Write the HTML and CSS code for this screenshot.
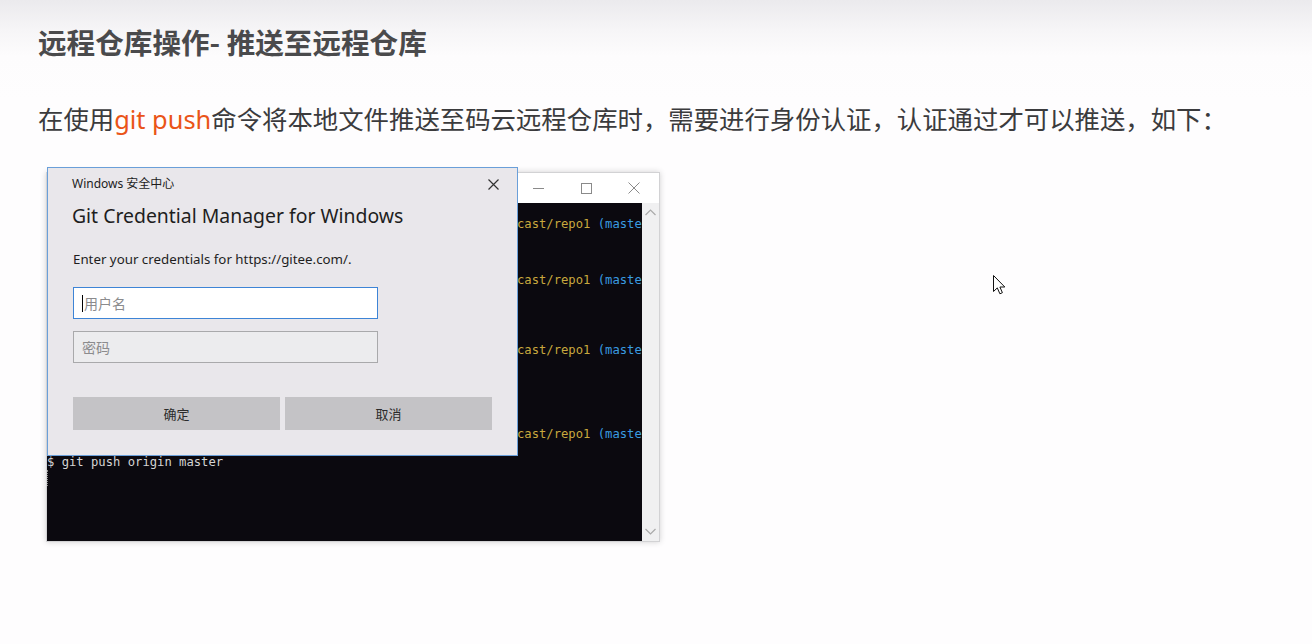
FILE: index.html
```html
<!DOCTYPE html>
<html lang="zh">
<head>
<meta charset="utf-8">
<title>远程仓库操作- 推送至远程仓库</title>
<link rel="stylesheet" href="styles.css">
</head>
<body>
<div class="page">
  <h1 class="title">远程仓库操作- 推送至远程仓库</h1>
  <p class="lead">在使用<span class="hl">git push</span>命令将本地文件推送至码云远程仓库时，需要进行身份认证，认证通过才可以推送，如下：</p>

  <div class="shot">
    <div class="term">
      <div class="term-bar">
        <div class="ctl"><svg width="11" height="11" viewBox="0 0 11 11"><line x1="0" y1="5.5" x2="11" y2="5.5" stroke="#8a8a8a" stroke-width="1"/></svg></div>
        <div class="ctl"><svg width="11" height="11" viewBox="0 0 11 11"><rect x="0.5" y="0.5" width="10" height="10" fill="none" stroke="#8a8a8a" stroke-width="1"/></svg></div>
        <div class="ctl"><svg width="12" height="12" viewBox="0 0 12 12"><path d="M0.5 0.5 L11.5 11.5 M11.5 0.5 L0.5 11.5" stroke="#8a8a8a" stroke-width="1"/></svg></div>
      </div>
      <div class="term-body">
        <div class="screen">
          <div class="ln prompt"><span class="y">cast/repo1</span> <span class="c">(maste</span></div>
          <div class="ln prompt gap4"><span class="y">cast/repo1</span> <span class="c">(maste</span></div>
          <div class="ln prompt gap5"><span class="y">cast/repo1</span> <span class="c">(maste</span></div>
          <div class="ln prompt gap6"><span class="y">cast/repo1</span> <span class="c">(maste</span></div>
          <div class="ln gap2">$ git push origin master</div>
          <div class="caret"></div>
        </div>
        <div class="scroll">
          <svg width="11" height="7" viewBox="0 0 11 7"><polyline points="0.5,6 5.5,1 10.5,6" fill="none" stroke="#a9a9a9" stroke-width="1.2"/></svg>
          <svg width="11" height="7" viewBox="0 0 11 7"><polyline points="0.5,1 5.5,6 10.5,1" fill="none" stroke="#a9a9a9" stroke-width="1.2"/></svg>
        </div>
      </div>
    </div>

    <div class="dialog">
      <div class="dlg-top">
        <span class="dlg-caption">Windows 安全中心</span>
        <svg class="dlg-x" width="11" height="11" viewBox="0 0 11 11"><path d="M0.5 0.5 L10.5 10.5 M10.5 0.5 L0.5 10.5" stroke="#333" stroke-width="1.2"/></svg>
      </div>
      <div class="dlg-head">Git Credential Manager for Windows</div>
      <div class="dlg-text">Enter your credentials for https://gitee.com/.</div>
      <div class="field focus"><span class="cur"></span><span class="ph">用户名</span></div>
      <div class="field second"><span class="ph">密码</span></div>
      <div class="btns">
        <div class="btn">确定</div>
        <div class="btn">取消</div>
      </div>
    </div>
  </div>
</div>

<svg class="pointer" width="14" height="21" viewBox="0 0 14 21"><path d="M0.5 0.5 L0.5 16.5 L4.3 12.9 L6.9 18.8 L9.4 17.7 L6.9 12 L11.8 12 Z" fill="#fff" stroke="#111" stroke-width="1" stroke-linejoin="miter"/></svg>
</body>
</html>
```

FILE: styles.css
```css
html, body {
  margin: 0;
  padding: 0;
}
body {
  width: 1312px;
  height: 644px;
  overflow: hidden;
  background: #fefdfe linear-gradient(#ebeaed 0px, #f6f5f7 30px, #fdfcfd 56px, #fefdfe 100px) no-repeat;
  font-family: "Noto Sans CJK SC", "Noto Sans", sans-serif;
  position: relative;
}
.page {
  padding: 22px 38px 0 38px;
}
.title {
  margin: 0;
  font-size: 28.6px;
  line-height: 40px;
  font-weight: 700;
  color: #4a4a4c;
  letter-spacing: 0;
}
.lead {
  margin: 38px 0 0 0;
  font-size: 25.4px;
  line-height: 36px;
  color: #3b3b3d;
  white-space: nowrap;
}
.hl {
  color: #ea5418;
  font-family: "Noto Sans", "Noto Sans CJK SC", sans-serif;
}
.shot {
  position: relative;
  margin: 30px 0 0 8px;
  padding-top: 5px;
  width: 614px;
  height: 370px;
}
.term {
  width: 614px;
  height: 370px;
  box-sizing: border-box;
  border: 1px solid #d2d2d4;
  background: #fff;
  box-shadow: 0 0 6px rgba(0, 0, 0, 0.18);
  display: flex;
  flex-direction: column;
}
.term-bar {
  height: 30px;
  display: flex;
  justify-content: flex-end;
  padding-right: 1px;
  background: #fff;
}
.ctl {
  width: 48px;
  height: 30px;
  display: flex;
  align-items: center;
  justify-content: center;
}
.term-body {
  flex: 1;
  display: flex;
  min-height: 0;
}
.screen {
  width: 595px;
  background: #0b090f;
  overflow: hidden;
  padding-top: 14px;
  box-sizing: border-box;
  font-family: "DejaVu Sans Mono", "Liberation Mono", monospace;
  font-size: 12.2px;
  line-height: 14px;
  color: #d4d4d4;
}
.ln {
  white-space: pre;
  height: 14px;
}
.prompt {
  padding-left: 470px;
}
.gap4 { margin-top: 42px; }
.gap5 { margin-top: 56px; }
.gap6 { margin-top: 70px; }
.gap2 { margin-top: 14px; }
.y { color: #c8a83e; }
.c { color: #3a9ce0; }
.caret {
  margin-top: 1px;
  width: 0;
  height: 16px;
  border-left: 1px dotted #8c8c8c;
}
.scroll {
  flex: 1;
  background: #f0f0f1;
  display: flex;
  flex-direction: column;
  justify-content: space-between;
  align-items: center;
  padding: 6px 0 6px 0;
}
.dialog {
  position: absolute;
  left: 1px;
  top: 0;
  width: 471px;
  height: 289px;
  box-sizing: border-box;
  border: 1px solid #6a9fd9;
  background: #e9e7eb;
  padding-left: 24px;
  font-family: "Noto Sans", "Noto Sans CJK SC", sans-serif;
  display: flex;
  flex-direction: column;
}
.dlg-top {
  margin-top: 8px;
  height: 16px;
  display: flex;
  align-items: center;
  justify-content: space-between;
  padding-right: 18px;
}
.dlg-caption {
  font-size: 12px;
  line-height: 16px;
  color: #1c1c1c;
}
.dlg-head {
  margin-top: 11px;
  font-size: 19.4px;
  line-height: 26px;
  color: #1e1e1e;
}
.dlg-text {
  margin-top: 21px;
  font-size: 13.3px;
  line-height: 18px;
  color: #1e1e1e;
  padding-left: 1px;
}
.field {
  margin-top: 19px;
  margin-left: 1px;
  width: 305px;
  height: 32px;
  box-sizing: border-box;
  border: 1px solid #a9a9ab;
  background: #ececee;
  display: flex;
  align-items: center;
  padding-left: 8px;
}
.field.focus {
  border: 1px solid #3d84d6;
  background: #fff;
}
.field.second {
  margin-top: 12px;
}
.cur {
  width: 1px;
  height: 17px;
  background: #000;
  margin-right: 1px;
}
.ph {
  font-family: "Noto Sans CJK SC", sans-serif;
  font-size: 14px;
  color: #8b8b8d;
}
.btns {
  margin-top: 34px;
  margin-left: 1px;
  display: flex;
  gap: 5px;
}
.btn {
  width: 207px;
  height: 33px;
  background: #c4c3c6;
  display: flex;
  align-items: center;
  justify-content: center;
  font-family: "Noto Sans CJK SC", sans-serif;
  font-size: 13px;
  color: #2b2b2b;
}
.pointer {
  position: absolute;
  left: 993px;
  top: 275px;
}
```
